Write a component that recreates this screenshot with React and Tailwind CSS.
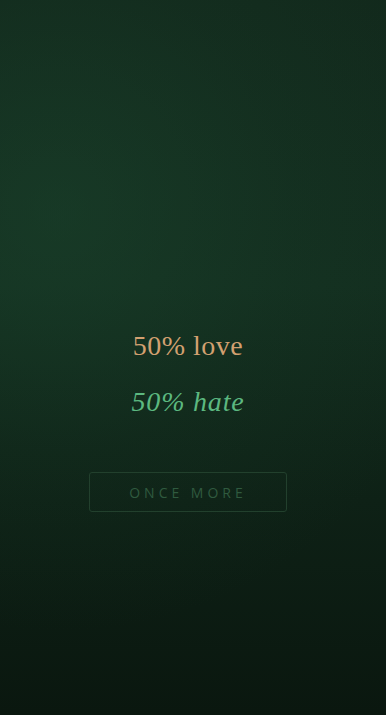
import React from "react";

const App = () => {
  return (
    <main className="relative min-h-screen w-full overflow-hidden bg-[linear-gradient(180deg,#12291c_0%,#132e1f_40%,#0e2116_70%,#0a170f_100%)]">
      <div className="absolute inset-0 bg-[radial-gradient(circle_at_15%_30%,rgba(30,76,50,0.4)_0%,rgba(30,76,50,0.12)_40%,rgba(0,0,0,0)_70%)]" />
      <div className="relative flex min-h-screen flex-col items-center pt-[326px] pr-[10px]">
        <p className="text-[28px] leading-[40px] text-[#d2a070] font-['Liberation_Serif','DejaVu_Serif',serif] tracking-[0.5px]">
          50% love
        </p>
        <p className="mt-[16px] text-[28px] leading-[40px] italic text-[#5cb880] font-['Liberation_Serif','DejaVu_Serif',serif] tracking-[0.8px]">
          50% hate
        </p>
        <button className="mt-[50px] flex h-[40px] w-[198px] items-center justify-center rounded-[3px] border border-[#22402d] text-[14px] tracking-[4px] text-[#2f5a3f] font-['Open_Sans','Liberation_Sans',sans-serif]">
          ONCE MORE
        </button>
      </div>
    </main>
  );
};

export default App;
